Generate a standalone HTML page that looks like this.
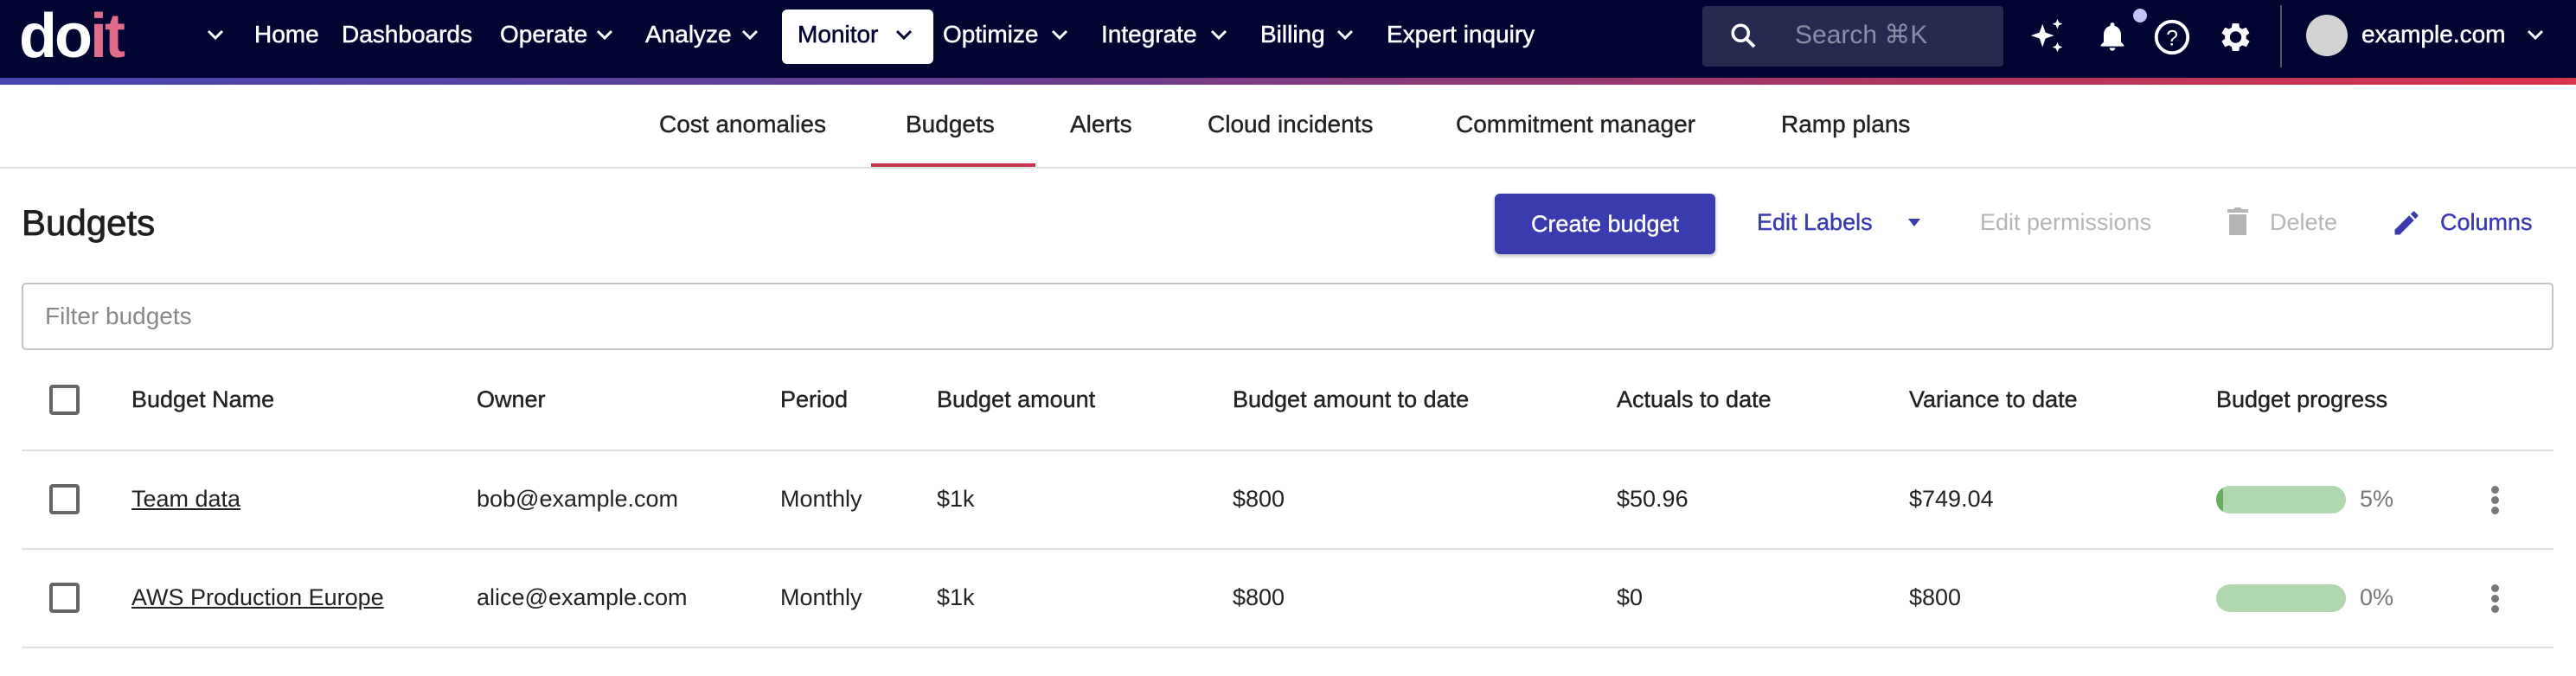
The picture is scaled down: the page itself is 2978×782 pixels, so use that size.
<!DOCTYPE html>
<html><head><meta charset="utf-8"><style>
*{margin:0;padding:0;box-sizing:border-box}
body{width:2978px;height:782px;position:relative;background:#fff;font-family:"Liberation Sans",sans-serif;color:#1f1f1f;overflow:hidden}
.a{position:absolute;white-space:nowrap}
.nav{position:absolute;left:0;top:0;width:2978px;height:90px;background:#020532}
.grad{position:absolute;left:0;top:90px;width:2978px;height:8px;background:linear-gradient(90deg,#4747b3,#6a3d8e 40%,#b13560 75%,#d8344c)}
.n{color:#fff;font-size:28px;top:24px;-webkit-text-stroke:0.5px #fff}
.tab{font-size:28px;top:128px;color:#222;-webkit-text-stroke:0.4px #222}
.h{font-size:27px;top:447px;color:#222;-webkit-text-stroke:0.4px #222}
.c{font-size:27px;color:#222}
.cb{position:absolute;left:57px;width:35px;height:35px;border:4px solid #666;border-radius:4px}
.line{position:absolute;left:25px;width:2927px;height:2px;background:#e0e0e0}
.bar{position:absolute;left:2562px;width:150px;height:32px;border-radius:16px;background:#b0d7ad;overflow:hidden}
.dots{position:absolute;left:2880px;width:10px}
.dots i{display:block;width:9px;height:9px;border-radius:50%;background:#777;margin-bottom:3px}
</style></head><body>
<div class="nav"></div>
<div class="grad"></div>
<div class="a" style="left:22px;top:2px;font-size:72px;font-weight:bold;color:#fff;letter-spacing:-3px;line-height:80px">do<span style="color:#e06b8b">it</span></div>
<svg class="a" style="left:238px;top:32px" width="22" height="16" viewBox="0 0 22 16"><path d="M3 4l8 8 8-8" stroke="#fff" stroke-width="3" fill="none"/></svg>
<div class="a n" style="left:294px">Home</div>
<div class="a n" style="left:395px">Dashboards</div>
<div class="a n" style="left:578px">Operate</div>
<svg class="a" style="left:688px;top:32px" width="22" height="16"><path d="M3 4l8 8 8-8" stroke="#fff" stroke-width="3" fill="none"/></svg>
<div class="a n" style="left:746px">Analyze</div>
<svg class="a" style="left:856px;top:32px" width="22" height="16"><path d="M3 4l8 8 8-8" stroke="#fff" stroke-width="3" fill="none"/></svg>
<div class="a" style="left:904px;top:11px;width:175px;height:63px;background:#fff;border-radius:6px"></div>
<div class="a n" style="left:922px;color:#020532;-webkit-text-stroke:0.5px #020532">Monitor</div>
<svg class="a" style="left:1034px;top:32px" width="22" height="16"><path d="M3 4l8 8 8-8" stroke="#020532" stroke-width="3" fill="none"/></svg>
<div class="a n" style="left:1090px">Optimize</div>
<svg class="a" style="left:1214px;top:32px" width="22" height="16"><path d="M3 4l8 8 8-8" stroke="#fff" stroke-width="3" fill="none"/></svg>
<div class="a n" style="left:1273px">Integrate</div>
<svg class="a" style="left:1398px;top:32px" width="22" height="16"><path d="M3 4l8 8 8-8" stroke="#fff" stroke-width="3" fill="none"/></svg>
<div class="a n" style="left:1457px">Billing</div>
<svg class="a" style="left:1544px;top:32px" width="22" height="16"><path d="M3 4l8 8 8-8" stroke="#fff" stroke-width="3" fill="none"/></svg>
<div class="a n" style="left:1603px">Expert inquiry</div>
<div class="a" style="left:1968px;top:7px;width:348px;height:70px;background:#272a50;border-radius:4px"></div>
<svg class="a" style="left:1998px;top:24px" width="36" height="36" viewBox="0 0 24 24"><circle cx="9.5" cy="9.5" r="6" stroke="#fff" stroke-width="2.4" fill="none"/><path d="M14 14l6 6" stroke="#fff" stroke-width="2.6"/></svg>
<div class="a n" style="left:2075px;top:23px;color:#8a8ca8;font-size:30px;-webkit-text-stroke:0">Search ⌘K</div>
<svg class="a" style="left:2344px;top:20px" width="46" height="46" viewBox="0 0 24 24"><path d="M9 4l1.8 5.2L16 11l-5.2 1.8L9 18l-1.8-5.2L2 11l5.2-1.8z M18 1l.9 2.1L21 4l-2.1.9L18 7l-.9-2.1L15 4l2.1-.9z M18 15l.9 2.1L21 18l-2.1.9L18 21l-.9-2.1L15 18l2.1-.9z" fill="#fff"/></svg>
<svg class="a" style="left:2422px;top:20px" width="40" height="44" viewBox="0 0 24 24"><path d="M12 22a2 2 0 002-2h-4a2 2 0 002 2zm6-6V11c0-3-1.6-5.6-4.5-6.3V4a1.5 1.5 0 00-3 0v.7C7.6 5.4 6 8 6 11v5l-2 2v1h16v-1z" fill="#fff"/></svg>
<div class="a" style="left:2466px;top:10px;width:16px;height:16px;border-radius:50%;background:#c0c4f8"></div>
<svg class="a" style="left:2488px;top:20px" width="46" height="46" viewBox="0 0 24 24"><circle cx="12" cy="12" r="9.5" stroke="#fff" stroke-width="2" fill="none"/><text x="12" y="17" font-size="13" fill="#fff" text-anchor="middle" font-family="Liberation Sans">?</text></svg>
<svg class="a" style="left:2560px;top:20px" width="46" height="46" viewBox="0 0 24 24"><path fill="#fff" d="M19.1 12.9a7 7 0 000-1.8l2-1.6-2-3.4-2.4 1a7 7 0 00-1.6-.9L14.8 3.7h-4l-.4 2.5a7 7 0 00-1.6.9l-2.4-1-2 3.4 2 1.6a7 7 0 000 1.8l-2 1.6 2 3.4 2.4-1a7 7 0 001.6.9l.4 2.5h4l.4-2.5a7 7 0 001.6-.9l2.4 1 2-3.4zM12.8 15.5a3.5 3.5 0 110-7 3.5 3.5 0 010 7z"/></svg>
<div class="a" style="left:2636px;top:6px;width:2px;height:72px;background:#555"></div>
<div class="a" style="left:2666px;top:17px;width:48px;height:48px;border-radius:50%;background:#d3d3d3"></div>
<div class="a n" style="left:2730px">example.com</div>
<svg class="a" style="left:2920px;top:32px" width="22" height="16"><path d="M3 4l8 8 8-8" stroke="#fff" stroke-width="3" fill="none"/></svg>
<div class="a tab" style="left:762px">Cost anomalies</div>
<div class="a tab" style="left:1047px">Budgets</div>
<div class="a tab" style="left:1237px">Alerts</div>
<div class="a tab" style="left:1396px">Cloud incidents</div>
<div class="a tab" style="left:1683px">Commitment manager</div>
<div class="a tab" style="left:2059px">Ramp plans</div>
<div class="a" style="left:1007px;top:189px;width:190px;height:4px;background:#c8334f"></div>
<div class="a" style="left:0;top:193px;width:2978px;height:2px;background:#e0e0e0"></div>
<div class="a" style="left:25px;top:234px;font-size:42px;-webkit-text-stroke:0.8px #1f1f1f">Budgets</div>
<div class="a" style="left:1728px;top:224px;width:255px;height:70px;background:#3b3bb0;border-radius:6px;box-shadow:0 2px 4px rgba(0,0,0,.3);color:#fff;font-size:27px;text-align:center;line-height:70px;-webkit-text-stroke:0.4px #fff">Create budget</div>
<div class="a" style="left:2031px;top:242px;font-size:27px;color:#3b3bb0;-webkit-text-stroke:0.4px #3b3bb0">Edit Labels</div>
<svg class="a" style="left:2203px;top:250px" width="20" height="14"><path d="M3 3h14l-7 9z" fill="#3b3bb0"/></svg>
<div class="a" style="left:2289px;top:242px;font-size:27px;color:#b5b5b5">Edit permissions</div>
<svg class="a" style="left:2572px;top:238px" width="30" height="36" viewBox="0 0 14 18"><path d="M2 5h10v12H2zM1 2h3.5l1-1h3l1 1H13v2H1z" fill="#b5b5b5"/></svg>
<div class="a" style="left:2624px;top:242px;font-size:27px;color:#b5b5b5">Delete</div>
<svg class="a" style="left:2764px;top:240px" width="36" height="36" viewBox="0 0 24 24"><path d="M3 17.2V21h3.8L17.8 9.9l-3.7-3.7zM20.7 7c.4-.4.4-1 0-1.4l-2.3-2.3a1 1 0 00-1.4 0l-1.8 1.8 3.7 3.7z" fill="#3b3bb0"/></svg>
<div class="a" style="left:2821px;top:242px;font-size:27px;color:#3b3bb0;-webkit-text-stroke:0.4px #3b3bb0">Columns</div>
<div class="a" style="left:25px;top:327px;width:2927px;height:78px;border:2px solid #c4c4c4;border-radius:5px"></div>
<div class="a" style="left:52px;top:350px;font-size:28px;color:#888">Filter budgets</div>
<div class="cb" style="top:445px"></div>
<div class="a h" style="left:152px">Budget Name</div>
<div class="a h" style="left:551px">Owner</div>
<div class="a h" style="left:902px">Period</div>
<div class="a h" style="left:1083px">Budget amount</div>
<div class="a h" style="left:1425px">Budget amount to date</div>
<div class="a h" style="left:1869px">Actuals to date</div>
<div class="a h" style="left:2207px">Variance to date</div>
<div class="a h" style="left:2562px">Budget progress</div>
<div class="line" style="top:520px"></div>
<div class="cb" style="top:560px"></div>
<div class="a c" style="left:152px;top:562px;text-decoration:underline">Team data</div>
<div class="a c" style="left:551px;top:562px">bob@example.com</div>
<div class="a c" style="left:902px;top:562px">Monthly</div>
<div class="a c" style="left:1083px;top:562px">$1k</div>
<div class="a c" style="left:1425px;top:562px">$800</div>
<div class="a c" style="left:1869px;top:562px">$50.96</div>
<div class="a c" style="left:2207px;top:562px">$749.04</div>
<div class="bar" style="top:562px"><div style="width:8px;height:32px;background:#66ad5c"></div></div>
<div class="a c" style="left:2728px;top:562px;color:#777">5%</div>
<div class="dots" style="top:562px"><i></i><i></i><i></i></div>
<div class="line" style="top:634px"></div>
<div class="cb" style="top:674px"></div>
<div class="a c" style="left:152px;top:676px;text-decoration:underline">AWS Production Europe</div>
<div class="a c" style="left:551px;top:676px">alice@example.com</div>
<div class="a c" style="left:902px;top:676px">Monthly</div>
<div class="a c" style="left:1083px;top:676px">$1k</div>
<div class="a c" style="left:1425px;top:676px">$800</div>
<div class="a c" style="left:1869px;top:676px">$0</div>
<div class="a c" style="left:2207px;top:676px">$800</div>
<div class="bar" style="top:676px"></div>
<div class="a c" style="left:2728px;top:676px;color:#777">0%</div>
<div class="dots" style="top:676px"><i></i><i></i><i></i></div>
<div class="line" style="top:748px"></div>
</body></html>
